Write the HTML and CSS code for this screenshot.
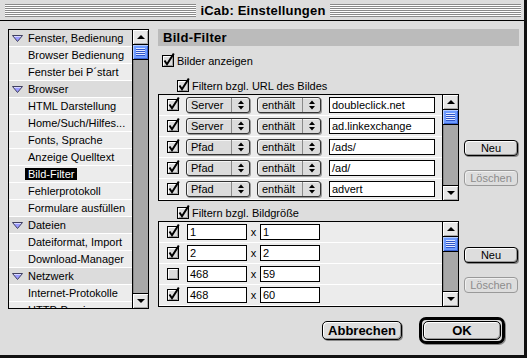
FILE: index.html
```html
<!DOCTYPE html>
<html lang="de">
<head>
    <meta charset="UTF-8">
    <title>iCab: Einstellungen</title>
    <link rel="stylesheet" href="styles.css">
</head>
<body>
    <svg class="defs" width="0" height="0">
        <defs>
            <g id="cb-box">
                <rect x="0.5" y="0.5" width="11" height="11" fill="#dcdcdc" stroke="#000"/>
                <path d="M1.5 10 V1.5 H10" stroke="#fff" fill="none"/>
                <path d="M2 10.5 H10.5 V2" stroke="#a0a0a0" fill="none"/>
            </g>
            <g id="cb-on">
                <use href="#cb-box"/>
                <path d="M2.5 5.5 L5 9.2 L11.8 -1.5" stroke="#000" stroke-width="2" fill="none"/>
            </g>
            <g id="disc">
                <path d="M0.5 0.5 H10.5 L5.5 6.5 Z" fill="#9c9cff" stroke="#404060"/>
                <path d="M2 1.5 H9" stroke="#d8d8ff"/>
            </g>
            <g id="updown">
                <path d="M0 4 L3 0.5 L6 4 Z M0 6 L3 9.5 L6 6 Z" fill="#000"/>
            </g>
        </defs>
    </svg>

    <div class="window">
        <div class="titlebar">
            <div class="stripes"></div>
            <div class="title">iCab: Einstellungen</div>
            <div class="stripes"></div>
        </div>

        <div class="content">
            <div class="main">
                <div class="nav">
                    <div class="nav-list">
                        <div class="nav-row head"><svg class="disc" viewBox="0 0 11 7"><use href="#disc"/></svg>Fenster, Bedienung</div>
                        <div class="nav-row">Browser Bedienung</div>
                        <div class="nav-row">Fenster bei P´start</div>
                        <div class="nav-row head"><svg class="disc" viewBox="0 0 11 7"><use href="#disc"/></svg>Browser</div>
                        <div class="nav-row">HTML Darstellung</div>
                        <div class="nav-row">Home/Such/Hilfes...</div>
                        <div class="nav-row">Fonts, Sprache</div>
                        <div class="nav-row">Anzeige Quelltext</div>
                        <div class="nav-row"><span class="sel">Bild-Filter</span></div>
                        <div class="nav-row">Fehlerprotokoll</div>
                        <div class="nav-row">Formulare ausfüllen</div>
                        <div class="nav-row head"><svg class="disc" viewBox="0 0 11 7"><use href="#disc"/></svg>Dateien</div>
                        <div class="nav-row">Dateiformat, Import</div>
                        <div class="nav-row">Download-Manager</div>
                        <div class="nav-row head"><svg class="disc" viewBox="0 0 11 7"><use href="#disc"/></svg>Netzwerk</div>
                        <div class="nav-row">Internet-Protokolle</div>
                        <div class="nav-row">HTTP-Proxies</div>
                    </div>
                    <div class="scrollbar">
                        <div class="sb-up"><span class="tri-up"></span></div>
                        <div class="sb-thumb"><span class="grip"></span></div>
                        <div class="sb-track"></div>
                        <div class="sb-down"><span class="tri-down"></span></div>
                    </div>
                </div>

                <div class="panel">
                    <div class="panel-head">Bild-Filter</div>

                    <div class="check-row">
                        <svg class="cb" viewBox="0 0 12 12"><use href="#cb-on"/></svg>
                        <span>Bilder anzeigen</span>
                    </div>

                    <div class="check-row sub">
                        <svg class="cb" viewBox="0 0 12 12"><use href="#cb-on"/></svg>
                        <span>Filtern bzgl. URL des Bildes</span>
                    </div>

                    <div class="list-block">
                        <div class="table url-table">
                            <div class="rows">
                                <div class="row">
                                    <svg class="cb" viewBox="0 0 12 12"><use href="#cb-on"/></svg>
                                    <div class="popup"><span class="popup-label">Server</span><span class="popup-arrows"><svg width="6" height="10"><use href="#updown"/></svg></span></div>
                                    <div class="popup"><span class="popup-label">enthält</span><span class="popup-arrows"><svg width="6" height="10"><use href="#updown"/></svg></span></div>
                                    <div class="field url-field">doubleclick.net</div>
                                </div>
                                <div class="row">
                                    <svg class="cb" viewBox="0 0 12 12"><use href="#cb-on"/></svg>
                                    <div class="popup"><span class="popup-label">Server</span><span class="popup-arrows"><svg width="6" height="10"><use href="#updown"/></svg></span></div>
                                    <div class="popup"><span class="popup-label">enthält</span><span class="popup-arrows"><svg width="6" height="10"><use href="#updown"/></svg></span></div>
                                    <div class="field url-field">ad.linkexchange</div>
                                </div>
                                <div class="row">
                                    <svg class="cb" viewBox="0 0 12 12"><use href="#cb-on"/></svg>
                                    <div class="popup"><span class="popup-label">Pfad</span><span class="popup-arrows"><svg width="6" height="10"><use href="#updown"/></svg></span></div>
                                    <div class="popup"><span class="popup-label">enthält</span><span class="popup-arrows"><svg width="6" height="10"><use href="#updown"/></svg></span></div>
                                    <div class="field url-field">/ads/</div>
                                </div>
                                <div class="row">
                                    <svg class="cb" viewBox="0 0 12 12"><use href="#cb-on"/></svg>
                                    <div class="popup"><span class="popup-label">Pfad</span><span class="popup-arrows"><svg width="6" height="10"><use href="#updown"/></svg></span></div>
                                    <div class="popup"><span class="popup-label">enthält</span><span class="popup-arrows"><svg width="6" height="10"><use href="#updown"/></svg></span></div>
                                    <div class="field url-field">/ad/</div>
                                </div>
                                <div class="row">
                                    <svg class="cb" viewBox="0 0 12 12"><use href="#cb-on"/></svg>
                                    <div class="popup"><span class="popup-label">Pfad</span><span class="popup-arrows"><svg width="6" height="10"><use href="#updown"/></svg></span></div>
                                    <div class="popup"><span class="popup-label">enthält</span><span class="popup-arrows"><svg width="6" height="10"><use href="#updown"/></svg></span></div>
                                    <div class="field url-field">advert</div>
                                </div>
                            </div>
                            <div class="scrollbar">
                                <div class="sb-up"><span class="tri-up"></span></div>
                                <div class="sb-thumb"><span class="grip"></span></div>
                                <div class="sb-track"></div>
                                <div class="sb-down"><span class="tri-down"></span></div>
                            </div>
                        </div>
                        <div class="side url-side">
                            <button class="btn">Neu</button>
                            <button class="btn disabled">Löschen</button>
                        </div>
                    </div>

                    <div class="check-row sub size-check">
                        <svg class="cb" viewBox="0 0 12 12"><use href="#cb-on"/></svg>
                        <span>Filtern bzgl. Bildgröße</span>
                    </div>

                    <div class="list-block">
                        <div class="table size-table">
                            <div class="rows">
                                <div class="row">
                                    <svg class="cb" viewBox="0 0 12 12"><use href="#cb-on"/></svg>
                                    <div class="field size-field">1</div>
                                    <span class="times">x</span>
                                    <div class="field size-field">1</div>
                                </div>
                                <div class="row">
                                    <svg class="cb" viewBox="0 0 12 12"><use href="#cb-on"/></svg>
                                    <div class="field size-field">2</div>
                                    <span class="times">x</span>
                                    <div class="field size-field">2</div>
                                </div>
                                <div class="row">
                                    <svg class="cb" viewBox="0 0 12 12"><use href="#cb-box"/></svg>
                                    <div class="field size-field">468</div>
                                    <span class="times">x</span>
                                    <div class="field size-field">59</div>
                                </div>
                                <div class="row">
                                    <svg class="cb" viewBox="0 0 12 12"><use href="#cb-on"/></svg>
                                    <div class="field size-field">468</div>
                                    <span class="times">x</span>
                                    <div class="field size-field">60</div>
                                </div>
                            </div>
                            <div class="scrollbar">
                                <div class="sb-up"><span class="tri-up"></span></div>
                                <div class="sb-thumb"><span class="grip"></span></div>
                                <div class="sb-track"></div>
                                <div class="sb-down"><span class="tri-down"></span></div>
                            </div>
                        </div>
                        <div class="side size-side">
                            <button class="btn">Neu</button>
                            <button class="btn disabled">Löschen</button>
                        </div>
                    </div>
                </div>
            </div>

            <div class="footer">
                <button class="btn big">Abbrechen</button>
                <div class="default-ring">
                    <button class="btn big ok">OK</button>
                </div>
            </div>
        </div>
    </div>
</body>
</html>
```

FILE: styles.css
```css
html, body {
    margin: 0;
    padding: 0;
    background-color: #dddddd;
    overflow: hidden;
}

body {
    font-family: "Liberation Sans", Arial, sans-serif;
    font-size: 11px;
    color: #000;
}

.defs {
    position: absolute;
    width: 0;
    height: 0;
    overflow: hidden;
}

.window {
    width: 527px;
    height: 358px;
    box-sizing: border-box;
    display: flex;
    flex-direction: column;
    background-color: #dddddd;
    border-right: 3px solid #111;
    border-bottom: 3px solid #111;
}

/* title bar */
.titlebar {
    height: 20px;
    display: flex;
    align-items: center;
    padding: 0 3px 0 5px;
    border-bottom: 1px solid #000;
}

.stripes {
    flex: 1;
    height: 13px;
    margin-top: 1px;
    background: repeating-linear-gradient(to bottom, #8a8a8a 0 1px, #ffffff 1px 2px);
}

.title {
    padding: 0 4px;
    font-size: 13px;
    font-weight: bold;
    letter-spacing: 0.2px;
}

.content {
    flex: 1;
    padding: 8px 5px 0 8px;
}

.main {
    display: flex;
    gap: 9px;
}

/* left list */
.nav {
    width: 141px;
    height: 280px;
    box-sizing: border-box;
    border: 1px solid #000;
    display: flex;
}

.nav-list {
    flex: 1;
    overflow: hidden;
    background-color: #ececec;
}

.nav-row {
    height: 17px;
    box-sizing: border-box;
    border-bottom: 1px solid #fff;
    padding-left: 19px;
    display: flex;
    align-items: center;
    white-space: nowrap;
}

.nav-row.head {
    background-color: #dcdcdc;
    padding-left: 3px;
}

.disc {
    width: 11px;
    height: 7px;
    margin-right: 5px;
    margin-top: 1px;
}

.sel {
    background-color: #000;
    color: #fff;
    line-height: 12px;
    padding: 0 3px;
    margin-left: -3px;
}

/* scroll bars */
.scrollbar {
    width: 15px;
    border-left: 1px solid #000;
    display: flex;
    flex-direction: column;
}

.sb-up, .sb-down {
    height: 14px;
    background-color: #e6e6e6;
    display: flex;
    align-items: center;
    justify-content: center;
    box-shadow: inset 1px 1px 0 #fff, inset -1px -1px 0 #aaa;
}

.sb-up {
    border-bottom: 1px solid #000;
}

.sb-down {
    border-top: 1px solid #000;
}

.tri-up, .tri-down {
    width: 0;
    height: 0;
    border-left: 4px solid transparent;
    border-right: 4px solid transparent;
}

.tri-up {
    border-bottom: 4px solid #000;
}

.tri-down {
    border-top: 4px solid #000;
}

.sb-thumb {
    height: 14px;
    background-color: #6d9bff;
    border-bottom: 1px solid #000;
    display: flex;
    align-items: center;
    justify-content: center;
    box-shadow: inset 1px 1px 0 #b4ccff, inset -1px -1px 0 #3a62d0;
}

.grip {
    width: 9px;
    height: 8px;
    background: repeating-linear-gradient(to bottom, #dfe8ff 0 1px, #2f55c8 1px 2px);
}

.sb-track {
    flex: 1;
    background-color: #a8a8a8;
    box-shadow: inset 1px 0 0 #8a8a8a;
}

/* right panel */
.panel {
    width: 361px;
    display: flex;
    flex-direction: column;
}

.panel-head {
    height: 17px;
    line-height: 17px;
    background-color: #bbbbbb;
    padding-left: 5px;
    font-size: 13px;
    font-weight: bold;
    letter-spacing: 0.3px;
}

.check-row {
    display: flex;
    align-items: center;
    gap: 3px;
    height: 12px;
    margin: 9px 0 0 4px;
}

.check-row.sub {
    margin: 13px 0 0 19px;
}

.check-row.size-check {
    margin-top: 6px;
}

.cb {
    width: 12px;
    height: 12px;
    flex: none;
    overflow: visible;
}

.list-block {
    display: flex;
    align-items: flex-start;
    gap: 5px;
    margin-top: 2px;
}

.table {
    width: 301px;
    box-sizing: border-box;
    border: 1px solid #000;
    display: flex;
}

.url-table {
    height: 107px;
}

.size-table {
    height: 86px;
}

.rows {
    flex: 1;
    background-color: #ececec;
}

.row {
    height: 21px;
    box-sizing: border-box;
    border-bottom: 1px solid #fff;
    display: flex;
    align-items: center;
    gap: 7px;
    padding-left: 8px;
}

.popup {
    width: 64px;
    height: 16px;
    box-sizing: border-box;
    border: 1px solid #333;
    border-radius: 3px;
    background-color: #dcdcdc;
    display: flex;
    align-items: center;
    box-shadow: inset 1px 1px 0 #f4f4f4, 1px 1px 0 #9a9a9a;
}

.popup-label {
    flex: 1;
    padding-left: 4px;
}

.popup-arrows {
    width: 17px;
    height: 100%;
    border-left: 1px solid #8a8a8a;
    display: flex;
    align-items: center;
    justify-content: center;
}

.field {
    height: 16px;
    box-sizing: border-box;
    border: 1px solid #000;
    background-color: #fff;
    padding-left: 2px;
    line-height: 14px;
    white-space: nowrap;
    overflow: hidden;
}

.url-field {
    width: 106px;
    margin-left: 1px;
}

.size-field {
    width: 60px;
}

.row .size-field:first-of-type {
    margin-left: 1px;
}

.times {
    width: 13px;
    margin: 0 -7px;
    text-align: center;
}

.side {
    display: flex;
    flex-direction: column;
    gap: 14px;
}

.url-side {
    margin-top: 46px;
}

.size-side {
    margin-top: 26px;
}

/* buttons */
.btn {
    width: 54px;
    height: 16px;
    padding: 0;
    box-sizing: border-box;
    border: 1px solid #000;
    border-radius: 4px;
    background-color: #dddddd;
    font-family: "Liberation Sans", Arial, sans-serif;
    font-size: 11px;
    color: #000;
    box-shadow: inset 1px 1px 0 #fff, inset -1px -1px 0 #999, 1px 1px 0 #888;
}

.btn.disabled {
    border-color: #999;
    color: #8c8c8c;
    box-shadow: inset 1px 1px 0 #f0f0f0;
}

.footer {
    display: flex;
    justify-content: flex-end;
    align-items: center;
    gap: 17px;
    margin-top: 8px;
    padding-right: 14px;
}

.btn.big {
    width: 80px;
    height: 19px;
    font-size: 13px;
    font-weight: bold;
    border-radius: 5px;
}

.btn.big.ok {
    width: 78px;
    box-shadow: inset 1px 1px 0 #fff, inset -1px -1px 0 #999;
}

.default-ring {
    border: 3px solid #000;
    border-radius: 7px;
    padding: 1px;
    display: flex;
    box-shadow: 1px 1px 0 #888;
}
```
